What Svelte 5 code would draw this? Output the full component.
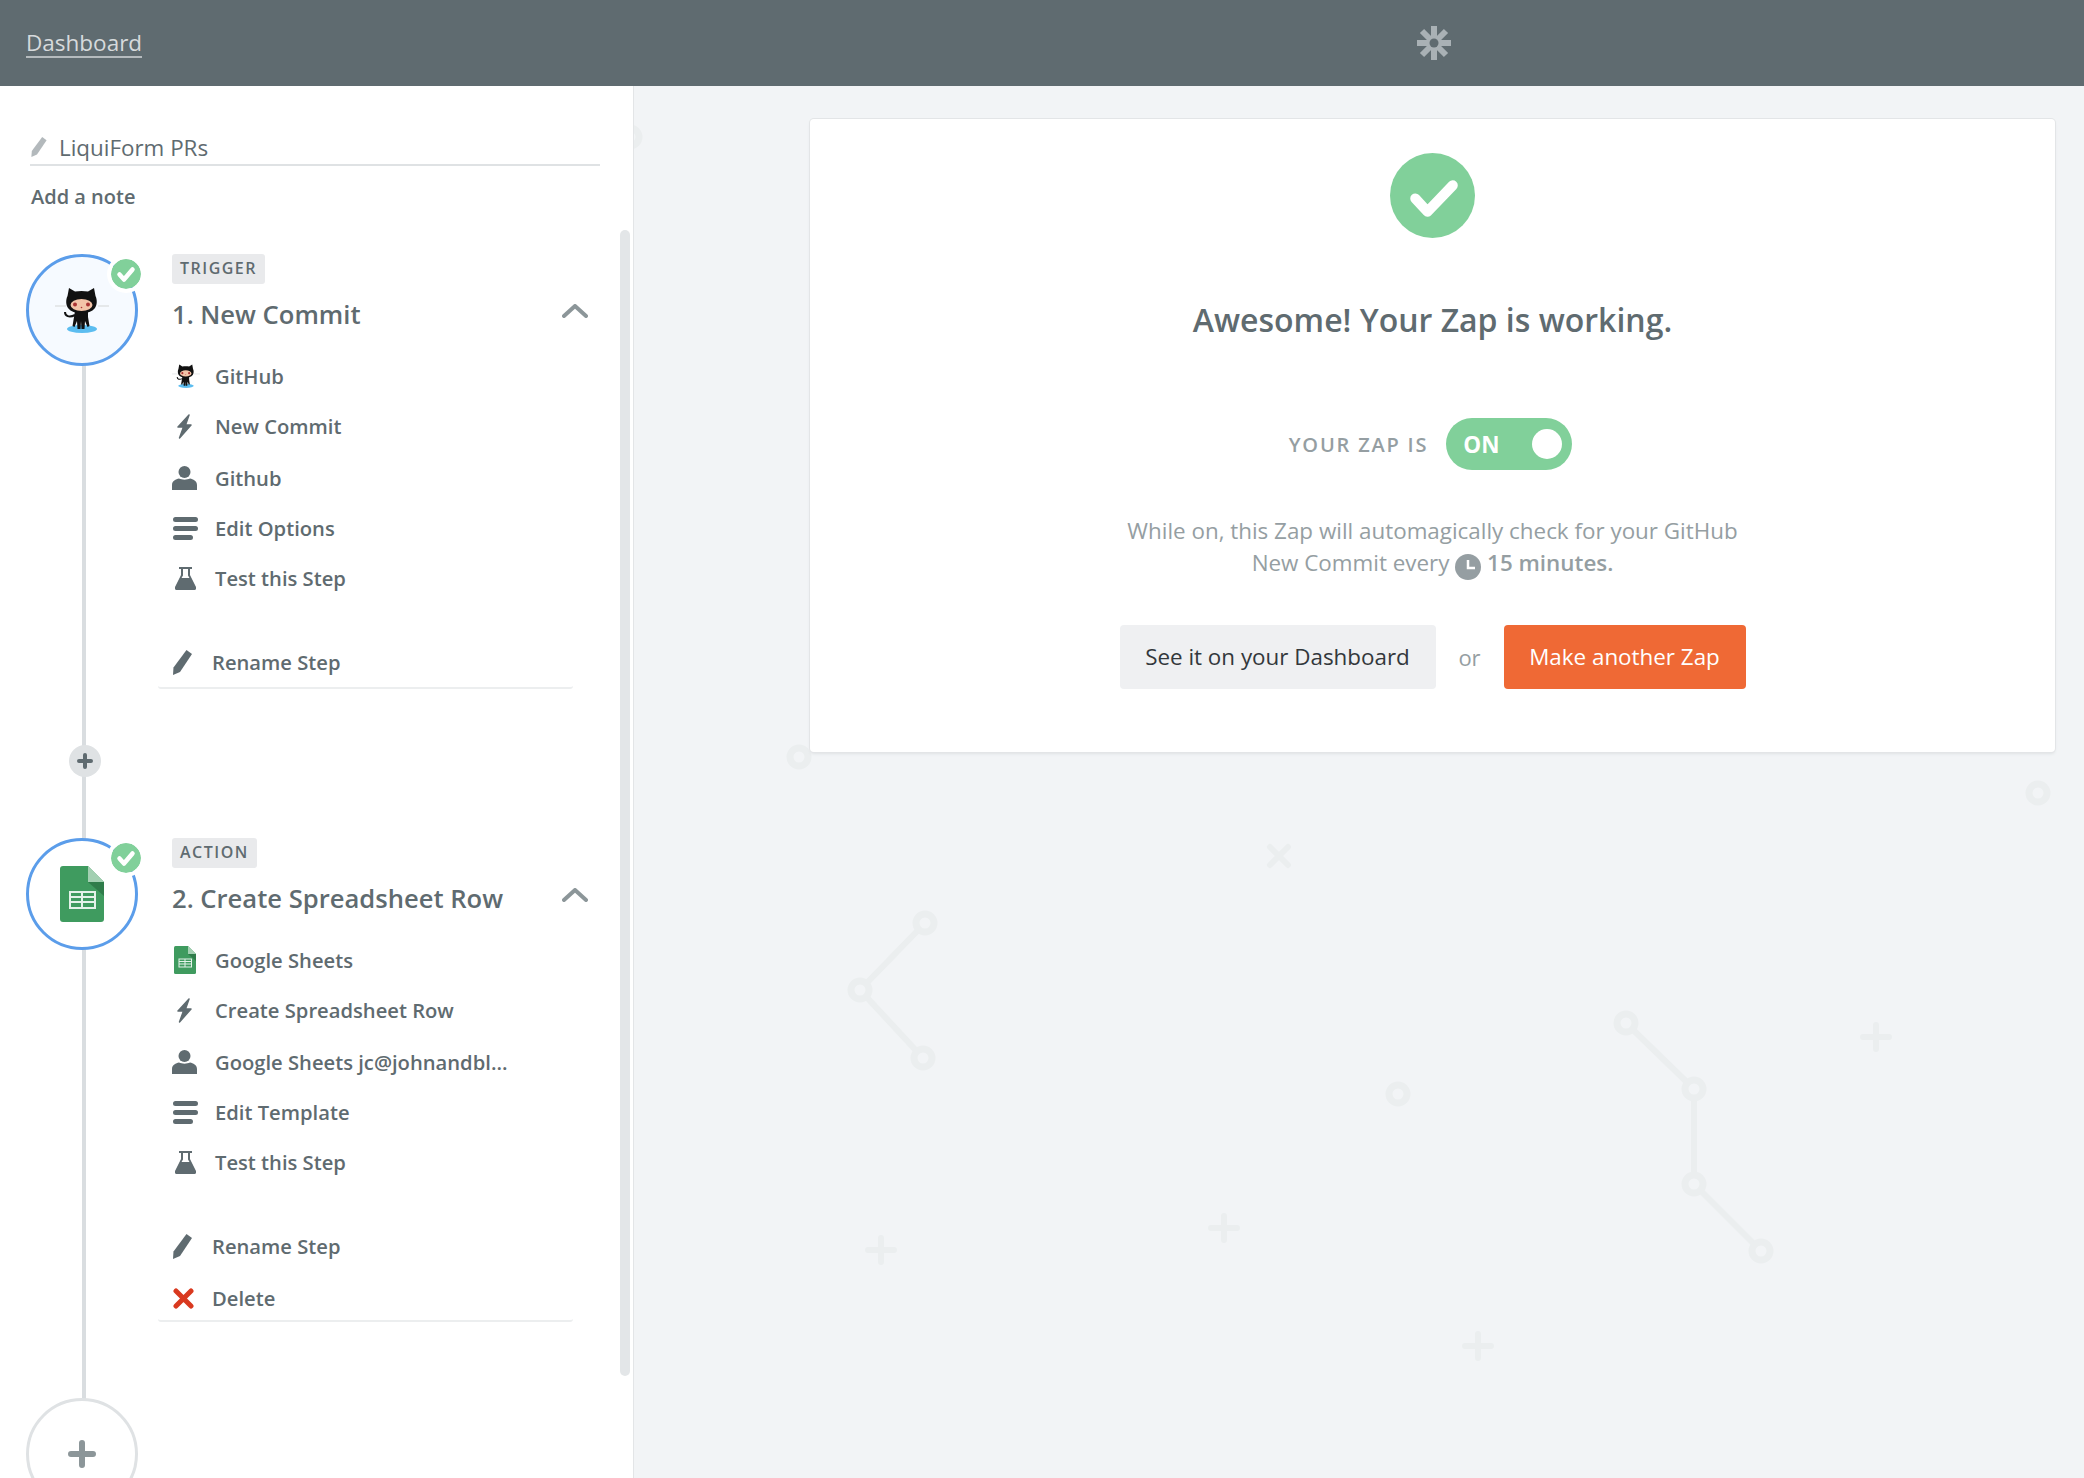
<script>
  const steps = [
    {
      kind: "TRIGGER",
      title: "1. New Commit",
      logo: "octocat",
      items: [
        { icon: "octocat", label: "GitHub" },
        { icon: "bolt", label: "New Commit" },
        { icon: "user", label: "Github" },
        { icon: "lines", label: "Edit Options" },
        { icon: "flask", label: "Test this Step" }
      ],
      canDelete: false
    },
    {
      kind: "ACTION",
      title: "2. Create Spreadsheet Row",
      logo: "sheets",
      items: [
        { icon: "sheets", label: "Google Sheets" },
        { icon: "bolt", label: "Create Spreadsheet Row" },
        { icon: "user", label: "Google Sheets jc@johnandbl..." },
        { icon: "lines", label: "Edit Template" },
        { icon: "flask", label: "Test this Step" }
      ],
      canDelete: true
    }
  ];

  const rings = [[799, 757], [2038, 793], [1398, 1094], [630, 137]];
  const nodes = [[925, 923], [860, 990], [923, 1058], [1626, 1023], [1694, 1089], [1694, 1184], [1761, 1251]];
  const links = [[0, 1], [1, 2], [3, 4], [4, 5], [5, 6]];
  const pluses = [[881, 1250], [1224, 1228], [1876, 1037], [1478, 1346]];
</script>

<svg class="defs" aria-hidden="true">
  <symbol id="octocat" viewBox="0 0 54 46">
    <path d="M0 19h11M43 19h11" stroke="#dfe2e4" stroke-width="1.4" />
    <ellipse cx="27" cy="42" rx="15" ry="4" fill="#5cbdf0" />
    <path d="M20 28C14 31 10 29 10 25" fill="none" stroke="#111" stroke-width="2" />
    <path d="M20 24h13v6l1.500 9-2 1-2.500-6-.5 8h-3l-.5-8-.5 8h-3l-.5-8-2.500 6-2-1 1.500-9z" fill="#111" />
    <path d="M14 1l6 3.500c4-.7 9-.7 13 0L39 1l1.500 8c2 4 1.500 9-.5 12-3 4-7.500 5-13.500 5s-10.500-1-13.500-5c-2-3-2.500-8-.5-12z" fill="#111" />
    <ellipse cx="26.500" cy="18" rx="11" ry="6" fill="#f3c4a8" />
    <circle cx="20" cy="17.500" r="2" fill="#a33" />
    <circle cx="33" cy="17.500" r="2" fill="#a33" />
    <circle cx="26.500" cy="20.500" r="0.8" fill="#a33" />
  </symbol>
  <symbol id="sheets" viewBox="0 0 44 56">
    <path d="M3 0h25l16 16v37a3 3 0 0 1-3 3H3a3 3 0 0 1-3-3V3a3 3 0 0 1 3-3z" fill="#3f9b5f" />
    <path d="M28 16h16v14z" fill="#2f7c4a" />
    <path d="M28 0l16 16H28z" fill="#a3d0b2" />
    <path d="M9 25h27v18H9zM11 27v3h10v-3zM23 27v3h11v-3zM11 32v3h10v-3zM23 32v3h11v-3zM11 37v4h10v-4zM23 37v4h11v-4z" fill="#e4f2e9" fill-rule="evenodd" />
  </symbol>
  <symbol id="bolt" viewBox="0 0 15 25">
    <path d="M12 1L1 13h5.500L2.500 24 14 11H8.500z" fill="currentColor" stroke="currentColor" stroke-width="1.500" stroke-linejoin="round" />
  </symbol>
  <symbol id="user" viewBox="0 0 25 24">
    <circle cx="12.500" cy="6" r="6" fill="currentColor" />
    <path d="M0 24v-5c0-4 4-6 7-6.500 3 1.500 8 1.500 11 0 3 .5 7 2.500 7 6.500v5z" fill="currentColor" />
  </symbol>
  <symbol id="lines" viewBox="0 0 25 23">
    <path d="M2.500 2.500h20M2.500 11.500h20M2.500 20.500h15" stroke="currentColor" stroke-width="5" stroke-linecap="round" />
  </symbol>
  <symbol id="flask" viewBox="0 0 21 23">
    <path d="M4 0h13v2h-2v6l6 12c.5 1.500 0 3-2 3H2c-2 0-2.500-1.500-2-3L6 8V2H4zM8 2v6.500L6.500 11h8L13 8.500V2z" fill="currentColor" fill-rule="evenodd" />
  </symbol>
  <symbol id="pencil" viewBox="0 0 19 25">
    <path d="M13.500 0L19 4 7 22 0 25l.5-7.500z" fill="currentColor" />
  </symbol>
  <symbol id="cross" viewBox="0 0 21 21">
    <path d="M3 3l15 15M18 3L3 18" stroke="currentColor" stroke-width="5" stroke-linecap="round" />
  </symbol>
  <symbol id="check" viewBox="0 0 30 30">
    <circle cx="15" cy="15" r="15" fill="#81d09a" />
    <path d="M8.500 15.500l4.500 5 8.500-10" fill="none" stroke="#fff" stroke-width="4.500" stroke-linecap="round" stroke-linejoin="round" />
  </symbol>
</svg>

<div class="page">
  <svg class="pattern" viewBox="0 0 2084 1478" aria-hidden="true">
    {#each links as [a, b]}
      <line x1={nodes[a][0]} y1={nodes[a][1]} x2={nodes[b][0]} y2={nodes[b][1]} />
    {/each}
    {#each [...rings, ...nodes] as [x, y]}
      <circle cx={x} cy={y} r="9" />
    {/each}
    {#each pluses as [x, y]}
      <path d="M{x - 13} {y}h26M{x} {y - 12}v24" />
    {/each}
    <path d="M1270 847l18 18M1288 847l-18 18" />
  </svg>

  <header class="topbar">
    <a class="dash-link" href="#dashboard">Dashboard</a>
    <svg class="logo" viewBox="0 0 36 36" aria-hidden="true">
      <path d="M18 1v34M1 18h34M6 6l24 24M30 6L6 30" />
      <circle cx="18" cy="18" r="4.500" />
    </svg>
  </header>

  <div class="body">
    <aside class="sidebar">
      <div class="zap-name">
        <svg class="name-pencil"><use href="#pencil" /></svg>
        <span>LiquiForm PRs</span>
      </div>
      <div class="add-note">Add a note</div>

      <div class="steps">
        <div class="rail"></div>
        {#each steps as step, i}
          {#if i > 0}
            <div class="connector">
              <span class="mini-plus"><svg viewBox="0 0 16 16"><path d="M8 2v12M2 8h12" /></svg></span>
            </div>
          {/if}
          <section class="step">
            <div class="step-logo">
              <svg class={step.logo === "octocat" ? "logo-octocat" : "logo-sheets"}><use href="#{step.logo}" /></svg>
              <svg class="step-check"><use href="#check" /></svg>
            </div>
            <div class="step-body">
              <span class="chip">{step.kind}</span>
              <div class="step-title">
                <h2>{step.title}</h2>
                <svg class="chevron" viewBox="0 0 26 14"><path d="M2 12L13 2l11 10" /></svg>
              </div>
              <ul class="items">
                {#each step.items as item}
                  <li class:spaced={item.icon === "user"}>
                    <span class="item-icon"><svg class="ic-{item.icon}"><use href="#{item.icon}" /></svg></span>
                    {item.label}
                  </li>
                {/each}
              </ul>
              <ul class="actions">
                <li>
                  <span class="item-icon"><svg class="ic-pencil"><use href="#pencil" /></svg></span>
                  Rename Step
                </li>
                {#if step.canDelete}
                  <li class="delete">
                    <span class="item-icon"><svg class="ic-cross"><use href="#cross" /></svg></span>
                    Delete
                  </li>
                {/if}
              </ul>
            </div>
          </section>
        {/each}
        <div class="add-step">
          <svg viewBox="0 0 30 30"><path d="M15 4v22M4 15h22" /></svg>
        </div>
      </div>
      <div class="scrollbar"></div>
    </aside>

    <main class="main">
      <div class="card">
        <svg class="big-check" viewBox="0 0 84 84">
          <circle cx="42" cy="42" r="42" fill="#81d09a" />
          <path d="M25 45l12 13 25-26" fill="none" stroke="#fff" stroke-width="10" stroke-linecap="round" stroke-linejoin="round" />
        </svg>
        <h1>Awesome! Your Zap is working.</h1>
        <div class="status">
          <span class="status-label">YOUR ZAP IS</span>
          <span class="toggle"><span>ON</span><i></i></span>
        </div>
        <p class="blurb">
          While on, this Zap will automagically check for your GitHub<br />
          New Commit every
          <svg class="clock" viewBox="0 0 26 26">
            <circle cx="13" cy="13" r="13" fill="#959ea2" />
            <path d="M13 6v8h7" fill="none" stroke="#fff" stroke-width="2.500" />
          </svg>
          <b>15 minutes.</b>
        </p>
        <div class="cta">
          <button class="btn-light">See it on your Dashboard</button>
          <span class="or">or</span>
          <button class="btn-orange">Make another Zap</button>
        </div>
      </div>
    </main>
  </div>
</div>

<style>
  :global(body) {
    margin: 0;
    font-family: "Open Sans", "Liberation Sans", sans-serif;
    color: #5f6b70;
  }

  .defs {
    position: absolute;
    width: 0;
    height: 0;
  }

  .page {
    position: relative;
    width: 2084px;
    height: 1478px;
    overflow: hidden;
    background: #f2f4f6;
  }

  .pattern {
    position: absolute;
    inset: 0;
    width: 2084px;
    height: 1478px;
    fill: #f2f4f6;
    stroke: #ebeeef;
  }

  .pattern line,
  .pattern path {
    stroke-width: 6;
    stroke-linecap: round;
  }

  .pattern circle {
    stroke-width: 7;
  }

  .topbar {
    position: relative;
    height: 86px;
    background: #5f6b70;
    display: flex;
    align-items: center;
    padding-left: 26px;
  }

  .dash-link {
    color: #d6dadc;
    font-size: 22.500px;
    text-decoration: none;
    border-bottom: 2px solid #b5bbbe;
    line-height: 27px;
    margin-top: 1px;
  }

  .logo {
    position: absolute;
    left: 1416px;
    top: 25px;
    width: 36px;
    height: 36px;
    stroke: #a9b1b5;
    stroke-width: 6;
  }

  .logo circle {
    fill: #5f6b70;
    stroke: none;
  }

  .body {
    position: relative;
    display: flex;
    height: 1392px;
  }

  .sidebar {
    position: relative;
    width: 633px;
    flex: none;
    background: #fff;
    border-right: 1px solid #e3e5e7;
    overflow: hidden;
  }

  .zap-name {
    margin: 44px 33px 0 30px;
    height: 34px;
    border-bottom: 2px solid #dfe2e4;
    display: flex;
    align-items: center;
    gap: 11px;
    font-size: 22.400px;
    color: #5f6b70;
  }

  .name-pencil {
    width: 18px;
    height: 20px;
    color: #b3b9bc;
  }

  .add-note {
    margin: 18px 0 0 31px;
    font-size: 20px;
    font-weight: 600;
    line-height: 26px;
  }

  .steps {
    position: relative;
    margin-top: 44px;
    padding-left: 26px;
  }

  .rail {
    position: absolute;
    left: 82px;
    top: 100px;
    bottom: 60px;
    width: 4px;
    background: #d9dde0;
  }

  .step {
    position: relative;
    display: flex;
    gap: 34px;
  }

  .step-logo {
    position: relative;
    flex: none;
    width: 112px;
    height: 112px;
    box-sizing: border-box;
    border: 3px solid #5b9dea;
    border-radius: 50%;
    background: #f6faff;
    display: flex;
    align-items: center;
    justify-content: center;
  }

  .step-logo:has(.logo-sheets) {
    background: #fff;
  }

  .logo-octocat {
    width: 54px;
    height: 46px;
  }

  .logo-sheets {
    width: 44px;
    height: 56px;
  }

  .step-check {
    position: absolute;
    left: 82px;
    top: 2px;
    width: 30px;
    height: 30px;
    border-radius: 50%;
    box-shadow: 0 0 0 4px #fff;
  }

  .step-body {
    width: 416px;
  }

  .chip {
    display: inline-block;
    height: 30px;
    line-height: 29px;
    padding: 0 8px;
    background: #e9eaec;
    border-radius: 3px;
    font-size: 16px;
    font-weight: 600;
    letter-spacing: 1.500px;
    vertical-align: top;
  }

  .step-title {
    display: flex;
    align-items: center;
    justify-content: space-between;
    height: 60px;
    padding-bottom: 7px;
  }

  h2 {
    margin: 0;
    font-size: 25.600px;
    font-weight: 600;
    color: #5f6b70;
  }

  .chevron {
    width: 26px;
    height: 14px;
    margin: -7px 0 0 0;
    fill: none;
    stroke: #8c9699;
    stroke-width: 4;
    stroke-linecap: round;
    stroke-linejoin: round;
  }

  .items,
  .actions {
    list-style: none;
    margin: 0;
    padding: 0;
    font-size: 20.200px;
    font-weight: 600;
  }

  .items li,
  .actions li {
    display: flex;
    align-items: center;
    height: 50px;
  }

  .items li.spaced {
    margin-top: 2px;
  }

  .item-icon {
    flex: none;
    width: 43px;
    display: flex;
    align-items: center;
  }

  .actions {
    margin: 34px 0 0 -14px;
    padding-left: 14px;
    width: 415px;
    box-sizing: border-box;
    border-bottom: 2px solid #eceeef;
    border-radius: 0 0 3px 3px;
  }

  .actions .item-icon {
    width: 40px;
  }

  .actions .delete {
    margin: 2px 0 -3px;
  }

  .item-icon svg {
    color: #5f6b70;
  }

  .ic-octocat {
    width: 28px;
    height: 24px;
  }

  .ic-sheets {
    width: 22px;
    height: 28px;
    margin-left: 2px;
  }

  .ic-bolt {
    width: 15px;
    height: 25px;
    margin-left: 5px;
  }

  .ic-user {
    width: 25px;
    height: 24px;
  }

  .ic-lines {
    width: 25px;
    height: 23px;
    margin-left: 1px;
  }

  .ic-flask {
    width: 21px;
    height: 23px;
    margin-left: 3px;
  }

  .ic-pencil {
    width: 19px;
    height: 25px;
    margin-left: 1px;
  }

  .item-icon .ic-cross {
    width: 21px;
    height: 21px;
    margin-left: 1px;
    color: #d9391f;
  }

  .connector {
    position: relative;
    height: 149px;
    display: flex;
    align-items: center;
  }

  .mini-plus {
    width: 32px;
    height: 32px;
    margin: -5px 0 0 43px;
    border-radius: 50%;
    background: #dfe2e4;
    display: flex;
    align-items: center;
    justify-content: center;
  }

  .mini-plus svg {
    width: 16px;
    height: 16px;
    stroke: #5f6b70;
    stroke-width: 4;
    stroke-linecap: round;
  }

  .add-step {
    position: relative;
    margin-top: 76px;
    width: 112px;
    height: 112px;
    box-sizing: border-box;
    border: 3px solid #dfe2e4;
    border-radius: 50%;
    background: #fff;
    display: flex;
    align-items: center;
    justify-content: center;
  }

  .add-step svg {
    width: 30px;
    height: 30px;
    stroke: #8c9699;
    stroke-width: 6;
    stroke-linecap: round;
  }

  .scrollbar {
    position: absolute;
    left: 620px;
    top: 144px;
    width: 10px;
    height: 1146px;
    border-radius: 5px;
    background: #e3e6e8;
  }

  .main {
    position: relative;
    flex: 1;
  }

  .card {
    margin: 33px 0 0 176px;
    width: 1245px;
    height: 633px;
    box-sizing: border-box;
    padding-top: 34px;
    background: #fff;
    border-radius: 4px;
    box-shadow: 0 0 0 1px #e3e5e7, 0 2px 3px #dfe2e4;
    display: flex;
    flex-direction: column;
    align-items: center;
  }

  .big-check {
    width: 85px;
    height: 85px;
    flex: none;
  }

  h1 {
    margin: 61px 0 0;
    font-size: 32px;
    line-height: 42px;
    font-weight: 600;
    color: #5f6b70;
  }

  .status {
    margin: 77px 4px 0 0;
    display: flex;
    align-items: center;
    gap: 18px;
  }

  .status-label {
    font-size: 20px;
    font-weight: 600;
    letter-spacing: 1.800px;
    color: #959ea2;
  }

  .toggle {
    position: relative;
    width: 126px;
    height: 52px;
    border-radius: 26px;
    background: #81d09a;
    display: flex;
    align-items: center;
    padding-left: 17px;
    box-sizing: border-box;
    color: #fff;
    font-size: 22.500px;
    font-weight: 700;
  }

  .toggle i {
    position: absolute;
    right: 10px;
    top: 11px;
    width: 30px;
    height: 30px;
    border-radius: 50%;
    background: #fff;
  }

  .blurb {
    margin: 45px 0 0;
    font-size: 22.400px;
    line-height: 32px;
    text-align: center;
    color: #959ea2;
  }

  .blurb b {
    font-weight: 600;
  }

  .clock {
    width: 26px;
    height: 26px;
    vertical-align: -9px;
  }

  .cta {
    margin-top: 45px;
    display: flex;
    align-items: center;
  }

  .cta button {
    height: 64px;
    border: none;
    border-radius: 4px;
    font-family: inherit;
    font-size: 22.400px;
    padding: 0 0 2px;
  }

  .btn-light {
    width: 316px;
    background: #eff0f2;
    color: #33383c;
  }

  .btn-orange {
    width: 242px;
    background: #ef6935;
    color: #fff;
  }

  .or {
    width: 68px;
    text-align: center;
    font-size: 22px;
    color: #959ea2;
  }
</style>
